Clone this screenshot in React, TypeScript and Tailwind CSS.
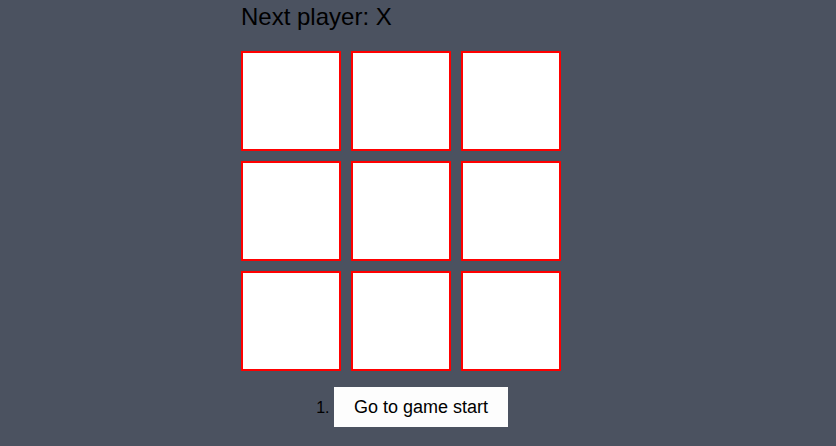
import React from "react";

export default function App() {
  const squares = Array.from({ length: 9 });
  return (
    <div className="min-h-[446px] w-full bg-[#4b5260] font-['Liberation_Sans',Arial,sans-serif] text-black">
      <div className="ml-[241px] flex w-[320px] flex-col">
        <div className="pt-[1px] text-[24px] leading-[32px]">Next player: X</div>
        <div className="mt-[18px] grid grid-cols-[100px_100px_100px] gap-[10px]">
          {squares.map((_, i) => (
            <button key={i} className="h-[100px] w-[100px] border-2 border-[#ff0000] bg-white" />
          ))}
        </div>
        <ol className="mt-[16px] list-decimal self-center pl-10 text-[16px]">
          <li>
            <button className="h-[40px] bg-[#fdfdfd] px-5 text-[18px]">Go to game start</button>
          </li>
        </ol>
      </div>
    </div>
  );
}
